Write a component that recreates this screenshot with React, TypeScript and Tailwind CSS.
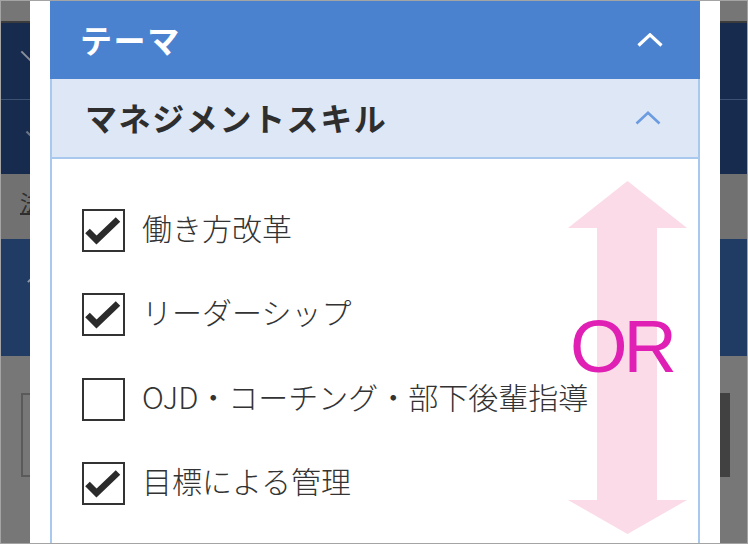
const ITEMS = [
  { label: '働き方改革', checked: true },
  { label: 'リーダーシップ', checked: true },
  { label: 'OJD・コーチング・部下後輩指導', checked: false },
  { label: '目標による管理', checked: true },
]

function Chevron({ className, width }: { className: string; width: number }) {
  return (
    <svg viewBox="0 0 26 14" className={className} fill="none">
      <polyline points="1.5,12.5 13,1.8 24.5,12.5" stroke="currentColor" strokeWidth={width} />
    </svg>
  )
}

function CheckBox({ checked }: { checked: boolean }) {
  return (
    <div className="w-[43px] h-[43px] shrink-0 border-2 border-[#333] bg-white">
      {checked && (
        <svg viewBox="0 0 39 39" className="w-full h-full">
          <polyline points="3.5,20 12.5,29 34,8.5" fill="none" stroke="#2b2b2b" strokeWidth={6.5} />
        </svg>
      )}
    </div>
  )
}

function PageBehind() {
  return (
    <div className="flex flex-col h-full">
      <div className="h-[22px] bg-[#767676] border-b-2 border-[#3c3c3c]" />
      <div className="h-[77px] bg-[#172b4f] border-b border-[#3d5272] relative">
        <span className="absolute left-[18px] top-[33px] w-[16px] h-[2px] bg-[#8a8f99] rotate-45" />
      </div>
      <div className="h-[74px] bg-[#172b4f] relative">
        <span className="absolute left-[24px] top-[34px] w-[10px] h-[2px] bg-[#6e7688] rotate-45" />
      </div>
      <div className="h-[65px] bg-[#717171] pl-[19px] pt-[16px]">
        <span className="text-[22px] leading-none text-[#2e2e2e] underline font-['Noto_Sans_CJK_JP',sans-serif]">法</span>
      </div>
      <div className="h-[117px] bg-[#213c64] relative">
        <span className="absolute left-[26px] top-[40px] w-[6px] h-[2px] bg-[#8d97aa] -rotate-45" />
      </div>
      <div className="flex-1 bg-[#777] pt-[37px] pl-[20px] pr-[17px] flex justify-between">
        <div className="w-[40px] h-[84px] border-2 border-[#5a5a5a]" />
        <div className="w-[40px] h-[84px] bg-[#414141]" />
      </div>
    </div>
  )
}

export default function App() {
  return (
    <div className="w-[748px] h-[544px] relative overflow-hidden border border-[#a4a4a4] bg-[#777]">
      <PageBehind />

      {/* modal */}
      <div className="absolute top-0 bottom-0 left-[29px] w-[690px] bg-white px-5 flex flex-col font-['Noto_Sans_CJK_JP',sans-serif]">
        <div className="h-[78px] shrink-0 bg-[#4b82d0] flex items-center justify-between pl-[30px] pr-[37px]">
          <span className="text-white font-bold text-[32px] tracking-[0.05em] leading-none mb-[3px]">テーマ</span>
          <Chevron className="w-[26px] h-[14px] text-white" width={3.2} />
        </div>
        <div className="h-[80px] shrink-0 bg-[#dde7f6] border-x-2 border-b-2 border-[#a9c8ee] flex items-center justify-between pl-[33px] pr-[37px]">
          <span className="text-[#2e2e2e] font-bold text-[32px] tracking-[0.05em] leading-none mb-[3px]">マネジメントスキル</span>
          <Chevron className="w-[26px] h-[14px] text-[#6b9be0]" width={2.6} />
        </div>
        <div className="flex-1 border-x-2 border-[#a9c8ee] pt-[50px] pl-[30px] flex flex-col gap-[41.3px]">
          {ITEMS.map((item) => (
            <div key={item.label} className="flex items-center gap-[17px]">
              <CheckBox checked={item.checked} />
              <span className="text-[30px] leading-none font-light text-[#333] whitespace-nowrap mb-[7px]">
                {item.label}
              </span>
            </div>
          ))}
        </div>
      </div>

      {/* annotation */}
      <svg viewBox="0 0 119 353" className="absolute left-[567px] top-[180px] w-[119px] h-[353px]">
        <polygon
          points="59.5,0 119,47 89,47 89,319 119,319 59.5,353 0,319 29,319 29,47 0,47"
          fill="#fbdbe8"
        />
      </svg>
      <span className="absolute left-[569px] top-[309px] text-[74px] leading-none text-[#e020b4] font-['Liberation_Sans',sans-serif] tracking-[-4px]">
        OR
      </span>
    </div>
  )
}
